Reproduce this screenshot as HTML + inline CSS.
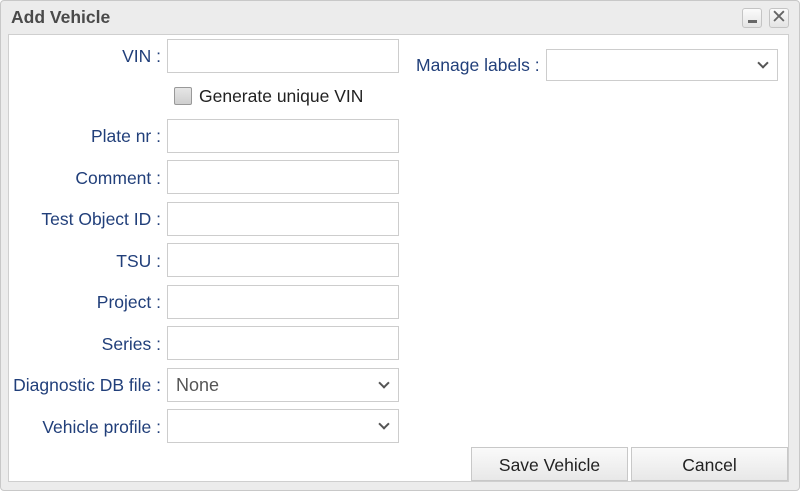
<!DOCTYPE html>
<html><head><style>
body{margin:0;width:800px;height:491px;overflow:hidden;background:#fff;font-family:"Liberation Sans",sans-serif;}
.win{position:absolute;left:0;top:0;width:798px;height:489px;border:1px solid #c8c8c8;border-radius:4px;background:#ececec;}
.title{position:absolute;left:10px;top:6px;font-weight:bold;font-size:17.5px;color:#4a4a4a;}
.tb{position:absolute;top:7px;width:20px;height:20px;border:1px solid #c4c4c4;border-radius:3px;background:linear-gradient(#fbfbfb,#e4e4e4);box-sizing:border-box;}
.panel{position:absolute;left:8px;top:34px;width:781px;height:448px;background:#fff;border:1px solid #cfcfcf;box-sizing:border-box;}
.lbl{position:absolute;right:639px;font-size:17.5px;color:#213f7a;white-space:nowrap;}
.in{position:absolute;left:167px;width:232px;height:34px;border:1px solid #cdcdcd;box-sizing:border-box;background:#fff;font-size:18px;color:#555;padding:6px 8px;}
.chev{position:absolute;right:10px;top:10px;width:6px;height:6px;border-right:2.5px solid #555;border-bottom:2.5px solid #555;transform:rotate(45deg);}
.btn{position:absolute;top:447px;height:34px;width:157px;border:1px solid #c8c8c8;box-sizing:border-box;background:linear-gradient(#fafafa,#e8e8e8);font-size:17.5px;color:#222;text-align:center;line-height:34px;}
</style></head><body>
<div class="win">
<div class="title">Add Vehicle</div>
<div class="tb" style="left:741px"><div style="position:absolute;left:5px;top:11px;width:9px;height:3px;background:#666"></div></div>
<div class="tb" style="left:768px;color:#666;font-size:19px;line-height:18px;text-align:center">✕</div>
</div>
<div class="panel"></div>
<div class="lbl" style="top:46px">VIN :</div>
<div class="in" style="top:39px"></div>
<div style="position:absolute;left:174px;top:87px;width:18px;height:18px;border:1px solid #999;box-sizing:border-box;background:linear-gradient(#e6e6e6,#cfcfcf);border-radius:2px"></div>
<div style="position:absolute;left:199px;top:86px;font-size:17.5px;color:#222">Generate unique VIN</div>
<div class="lbl" style="top:126px">Plate nr :</div><div class="in" style="top:119px"></div>
<div class="lbl" style="top:168px">Comment :</div><div class="in" style="top:160px"></div>
<div class="lbl" style="top:209px">Test Object ID :</div><div class="in" style="top:202px"></div>
<div class="lbl" style="top:251px">TSU :</div><div class="in" style="top:243px"></div>
<div class="lbl" style="top:292px">Project :</div><div class="in" style="top:285px"></div>
<div class="lbl" style="top:334px">Series :</div><div class="in" style="top:326px"></div>
<div class="lbl" style="top:375px">Diagnostic DB file :</div><div class="in" style="top:368px">None<div class="chev"></div></div>
<div class="lbl" style="top:417px">Vehicle profile :</div><div class="in" style="top:409px"><div class="chev"></div></div>
<div style="position:absolute;left:416px;top:55px;font-size:17.5px;color:#213f7a">Manage labels :</div>
<div class="in" style="left:546px;top:49px;height:32px"><div class="chev" style="top:9px"></div></div>
<div class="btn" style="left:471px">Save Vehicle</div>
<div class="btn" style="left:631px">Cancel</div>
</body></html>
